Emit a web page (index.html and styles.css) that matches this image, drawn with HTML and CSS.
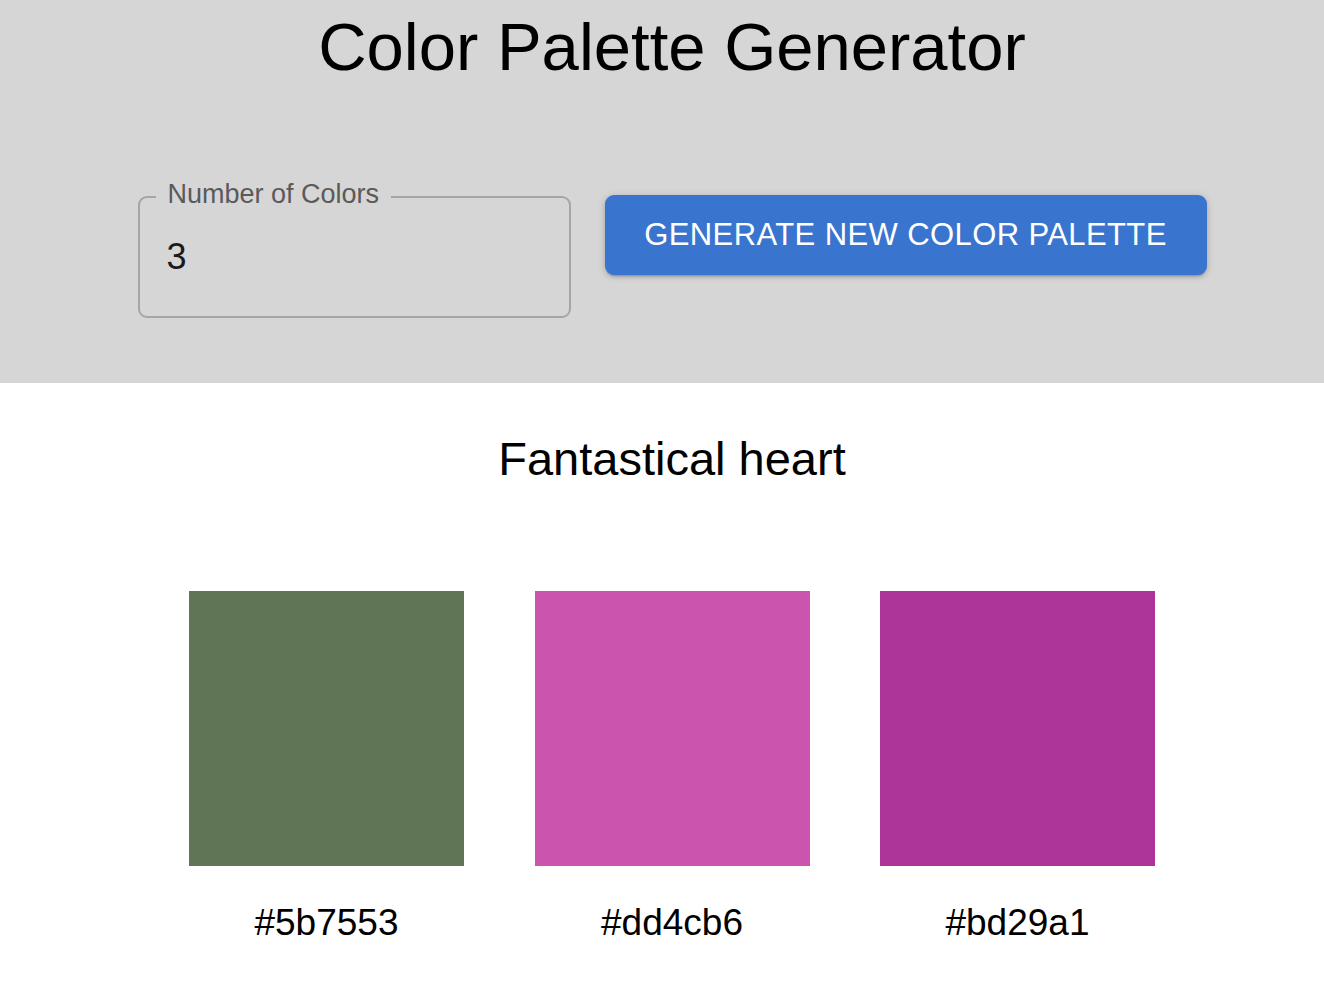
FILE: index.html
```html
<!DOCTYPE html>
<html lang="en">
<head>
<meta charset="utf-8">
<title>Color Palette Generator</title>
<link rel="stylesheet" href="styles.css">
</head>
<body>
<header class="header">
  <h1 class="title">Color Palette Generator</h1>
  <div class="controls">
    <div class="field">
      <label class="field-label">Number of Colors</label>
      <div class="field-value">3</div>
    </div>
    <button class="generate-btn">GENERATE NEW COLOR PALETTE</button>
  </div>
</header>
<main class="palette">
  <h2 class="palette-name">Fantastical heart</h2>
  <div class="swatches">
    <div class="swatch-item">
      <div class="swatch swatch-1"></div>
      <div class="swatch-label">#5b7553</div>
    </div>
    <div class="swatch-item">
      <div class="swatch swatch-2"></div>
      <div class="swatch-label">#dd4cb6</div>
    </div>
    <div class="swatch-item">
      <div class="swatch swatch-3"></div>
      <div class="swatch-label">#bd29a1</div>
    </div>
  </div>
</main>
</body>
</html>
```

FILE: styles.css
```css
* { box-sizing: border-box; }

html, body {
  margin: 0;
  padding: 0;
  background: #ffffff;
  font-family: "Liberation Sans", Arial, Helvetica, sans-serif;
  color: #000000;
}

.header {
  background: #d6d6d6;
  padding: 7px 0 65px 20px;
}

.title {
  margin: 0;
  font-size: 67px;
  line-height: 80px;
  font-weight: 400;
  text-align: center;
}

.controls {
  margin-top: 108px;
  display: flex;
  justify-content: center;
  align-items: flex-start;
  gap: 34px;
}

.field {
  position: relative;
  width: 433px;
  height: 122px;
  margin-top: 1px;
  border: 2px solid #a5a5a5;
  border-radius: 9px;
  display: flex;
  align-items: center;
  padding-left: 27px;
}

.field-label {
  position: absolute;
  top: -17px;
  left: 16px;
  padding: 0 12px;
  background: #d6d6d6;
  font-size: 27px;
  line-height: 27px;
  color: #5a5a5a;
  white-space: nowrap;
}

.field-value {
  font-size: 36px;
  line-height: 40px;
  color: #1a1a1a;
}

.generate-btn {
  width: 602px;
  height: 80px;
  border: none;
  border-radius: 9px;
  background: #3975ce;
  color: #ffffff;
  font-family: "Liberation Sans", Arial, Helvetica, sans-serif;
  font-size: 31px;
  letter-spacing: 0.4px;
  font-weight: 400;
  box-shadow: 0 3px 2px -2px rgba(0,0,0,0.2), 0 2px 4px 0 rgba(0,0,0,0.14), 0 1px 10px 0 rgba(0,0,0,0.12);
  padding: 0;
}

.palette {
  padding-left: 20px;
}

.palette-name {
  margin: 49px 0 0;
  font-size: 47px;
  line-height: 54px;
  font-weight: 400;
  text-align: center;
}

.swatches {
  margin-top: 105px;
  display: grid;
  grid-template-columns: repeat(3, 345.5px);
  justify-content: center;
}

.swatch-item {
  display: flex;
  flex-direction: column;
  align-items: center;
}

.swatch {
  width: 275px;
  height: 275px;
}

.swatch-1 { background: #607556; }
.swatch-2 { background: #cb55ae; }
.swatch-3 { background: #ad3499; }

.swatch-label {
  margin-top: 35px;
  font-size: 37px;
  line-height: 44px;
}
```
